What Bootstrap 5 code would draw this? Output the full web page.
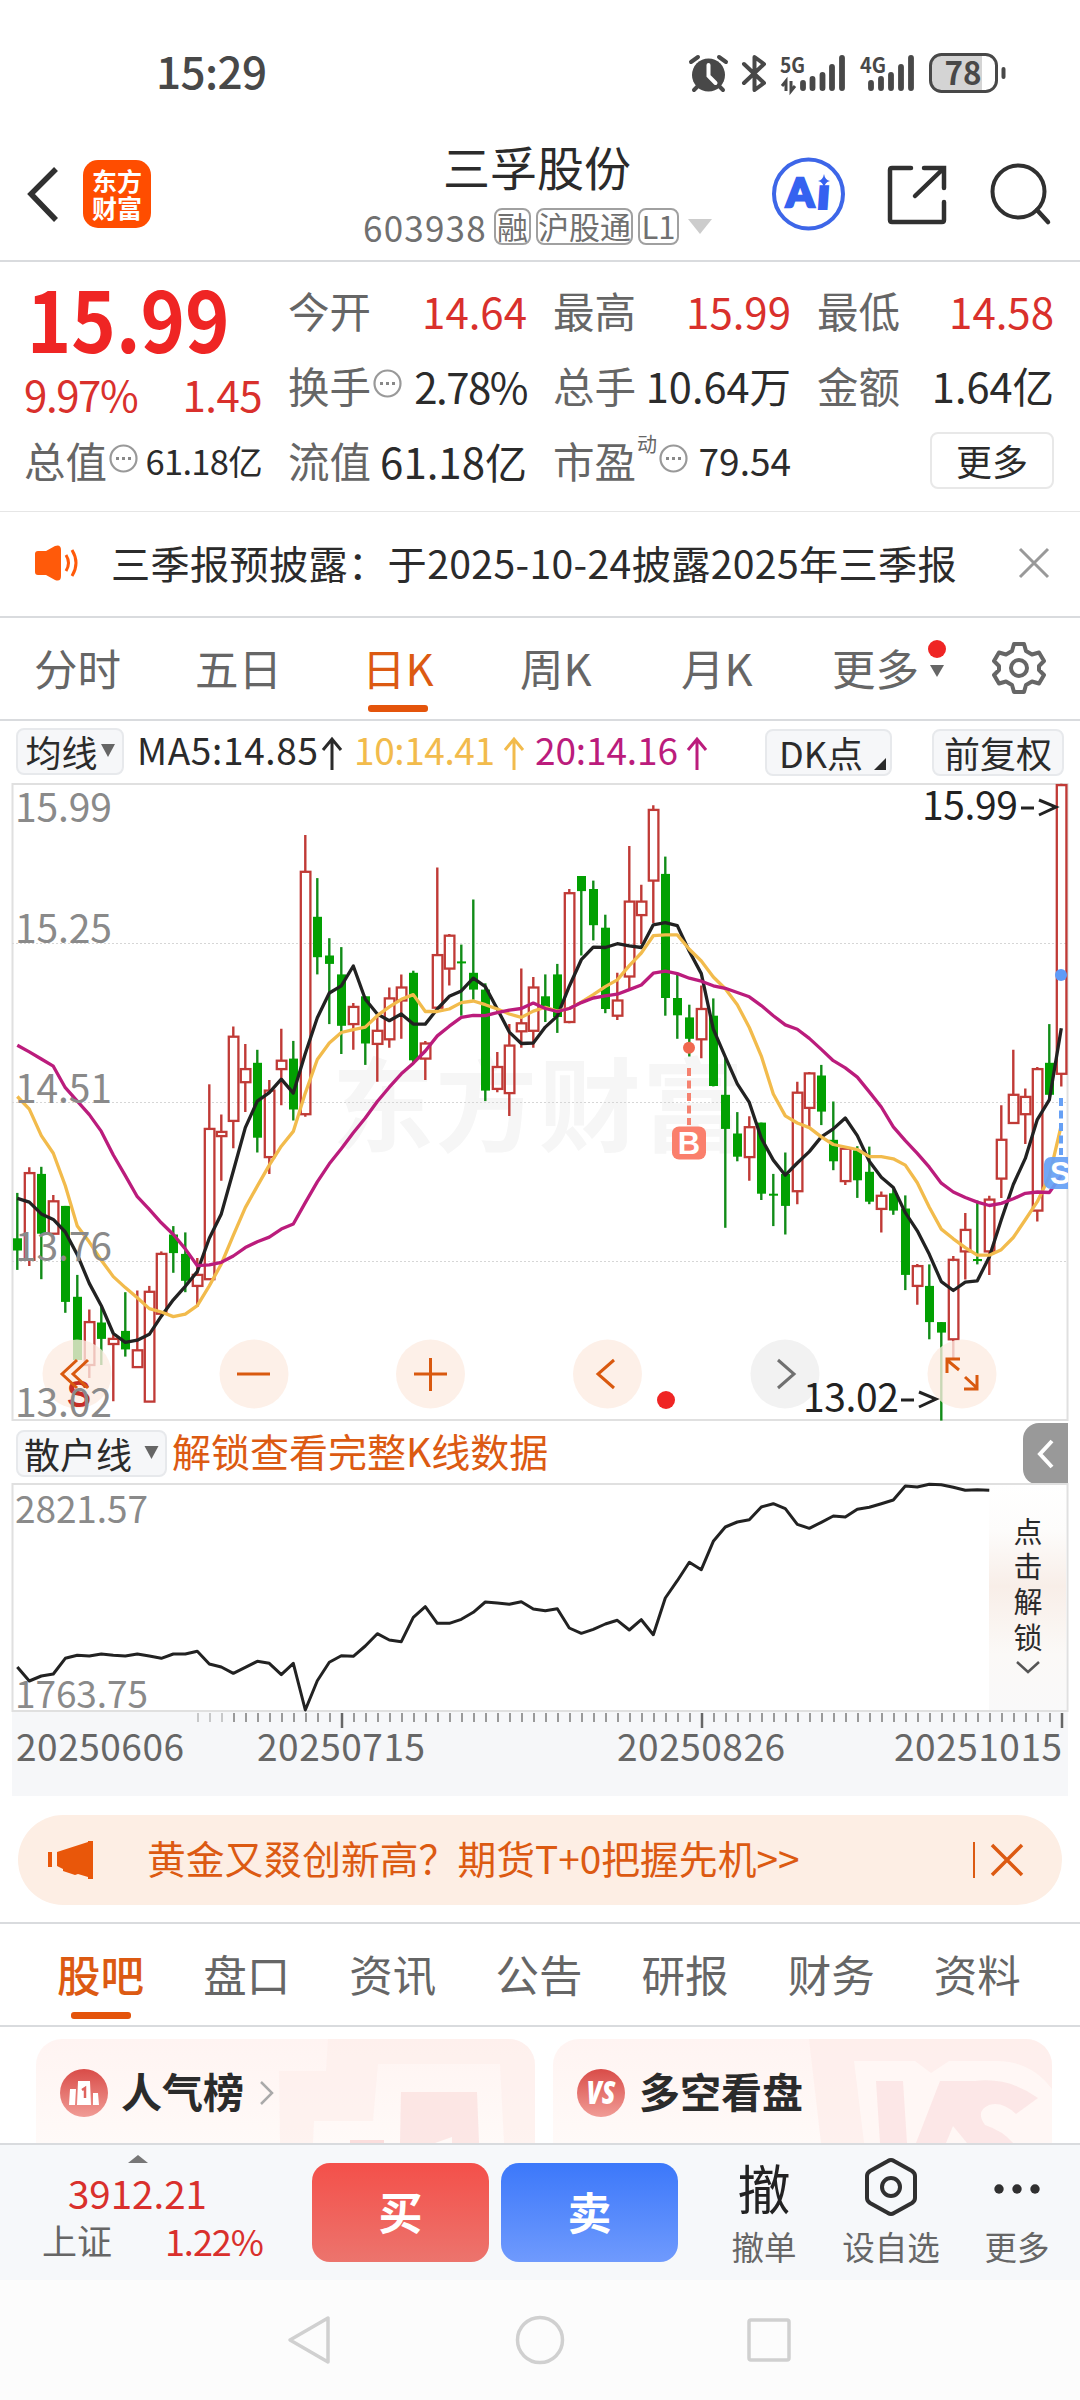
<!DOCTYPE html>
<html lang="zh-CN">
<head>
<meta charset="utf-8">
<meta name="viewport" content="width=device-width, initial-scale=1">
<title>三孚股份 603938</title>
<link href="https://cdn.jsdelivr.net/npm/bootstrap@5.3.0/dist/css/bootstrap.min.css" rel="stylesheet">
<style>
:root{--ink:#2b2b2b;--dim:#666;--up:#d9302c;--brand:#dc5a12;--rule:#d9dbde}
body{width:1080px;height:2400px;overflow:hidden;background:#fff;color:var(--ink);font-family:"Noto Sans CJK SC",sans-serif;line-height:1;white-space:nowrap}
svg{display:block;flex:none;overflow:visible}
.dim{color:var(--dim)} .up{color:var(--up)} .brand{color:var(--brand)}
.statusbar{height:124px;padding:48px 74px 0 156px;color:#484848}
.clock{font-size:44px;font-weight:500;letter-spacing:-.6px}
.titlebar{height:138px;border-bottom:2px solid var(--rule);padding:0 28px 0 26px}
.logo{width:68px;height:68px;margin-left:24px;background:#ff4d00;border-radius:15px;color:#fff;font-size:25px;font-weight:600;line-height:27px}
.titlebox{width:350px;margin-left:212px;padding-top:17px}
.stockname{font-size:47px;height:50px;line-height:50px;padding-left:80px}
.codeline{height:37px;margin-top:17px;gap:5px;color:#707070}
.codeline .num{font-size:35px;letter-spacing:1.2px;width:126px}
.tag{border:2px solid #a0a0a0;border-radius:8px;height:37px;line-height:31px;font-size:31px;text-align:center}
.quote{height:250px;border-bottom:1px solid #e6e6e6;display:grid;grid-template-columns:238px 239px 238px 237px;column-gap:26px;padding:11px 0 0 24px}
.qcol>div{height:75px;display:flex;align-items:center;justify-content:space-between;font-size:42px}
.qcol .lab{color:var(--dim);font-size:41.5px}
.qcol svg{margin:-4px auto 0 2px}
.price{font-size:84px;font-weight:700;color:#ef2524;transform:scaleX(.9);transform-origin:left}
.more-btn{width:124px;height:57px;border:2px solid #e8e8e8;border-radius:8px;font-size:36px;padding-bottom:2px}
.news{height:106px;border-bottom:2px solid var(--rule);padding:0 31px 2px 33px;font-size:39.2px;letter-spacing:.33px}
.periods{height:103px;border-bottom:2px solid var(--rule);font-size:43.5px;color:var(--dim);padding-left:34px}
.periods>div{height:101px;position:relative;display:flex;align-items:center;padding-bottom:2px}
.uline{position:absolute;width:60px;height:7px;border-radius:3px;background:#e4540b}
.chip{background:#f6f7f9;border:2px solid #e7e9ec;border-radius:8px;height:47px;font-size:36px;padding-bottom:2px;display:flex;align-items:center;justify-content:center}
.indic{height:64px;padding:7px 16px 0;font-size:37px}
.sub{height:62px;padding:7px 12px 0 16px}
.drawer{width:45px;height:62px;background:#999;border-radius:16px 0 0 16px;margin-top:-7px}
.promo{height:90px;border-radius:45px;background:#fdeee4;margin:18px 18px 17px;padding:0 38px 0 30px;font-size:38.8px}
.sections{height:105px;border-top:2px solid var(--rule);border-bottom:2px solid var(--rule);font-size:43.5px;color:var(--dim);padding-left:57px}
.sections>div{width:146.4px;height:101px;position:relative;display:flex;align-items:center;padding-bottom:2px}
.tiles{height:116px;padding:12px 28px 0 36px;gap:18px}
.tile{width:499px;height:104px;border-radius:26px 26px 0 0;background:linear-gradient(#fff4f2,#fffaf8);position:relative;overflow:hidden;font-size:41px;font-weight:600;padding:30px 0 0 24px}
.tile .art{position:absolute;right:0;top:0}
.tradebar{height:137px;background:#f6f8fa;border-top:2px solid var(--rule)}
.index{width:312px;padding:10px 0 0 42px}
.deal{width:177px;height:99px;border:0;border-radius:18px;color:#fff;font-size:44px;font-weight:700;margin-top:18px;padding-bottom:4px}
.buy{background:linear-gradient(#f4504a,#ec746d)} .sell{background:linear-gradient(#3c78fa,#6f9afd)}
.act{height:135px;font-size:32.5px;color:var(--dim);display:flex;flex-direction:column;align-items:center;padding-top:13px}
.act .pic{height:58px;display:flex;align-items:center;color:#222}
.sysnav{height:120px;background:#fcfcfc}
</style>
</head>
<body>
<header class="statusbar d-flex align-items-start justify-content-between">
  <div class="clock">15:29</div>
  <svg width="320" height="44" viewBox="686 50 320 44" fill="#484848" stroke="none" style="margin-top:2px">
    <circle cx="708.500" cy="75" r="16.500"/><path d="M708.500 65v11l7 7" stroke="#fff" stroke-width="4" fill="none" stroke-linecap="round"/>
    <path d="M691 62l7-5M726 62l-7-5M698 86l-4 4M719 86l4 4" stroke="#484848" stroke-width="4" fill="none" stroke-linecap="round"/>
    <path d="M744 64l20 19-9.500 7V57l9.500 7-20 19" stroke="#484848" stroke-width="4" fill="none" stroke-linejoin="round" stroke-linecap="round"/>
    <text x="780" y="73" font-size="21" font-weight="700" textLength="25" lengthAdjust="spacingAndGlyphs">5G</text>
    <path d="M786 91V81l-4 5M791 81v10l4-5" stroke="#484848" stroke-width="3" fill="none"/>
    <path d="M803 83v5M812.500 79v9M822.500 75v13M832 67v21M842 58v30" stroke="#484848" stroke-width="5.800" stroke-linecap="round"/>
    <text x="860" y="73" font-size="21" font-weight="700" textLength="26" lengthAdjust="spacingAndGlyphs">4G</text>
    <path d="M871 83v5M881 79v9M891 75v13M901 67v21M911 58v30" stroke="#484848" stroke-width="5.800" stroke-linecap="round"/>
    <path d="M940 56h42v36h-42q-9 0-9-9V65q0-9 9-9z" fill="#d4d4d4"/>
    <rect x="930.500" y="54.500" width="66" height="37" rx="11" fill="none" stroke="#484848" stroke-width="3"/>
    <path d="M1003.500 69v8" stroke="#484848" stroke-width="4" stroke-linecap="round"/>
    <text x="944.500" y="84.500" font-size="32" font-weight="700" textLength="37" lengthAdjust="spacingAndGlyphs">78</text>
  </svg>
</header>

<div class="titlebar d-flex align-items-start">
  <svg width="33" height="60" viewBox="0 0 33 60" style="margin-top:40px"><path d="M30 5L5 30l25 26" fill="none" stroke="#303030" stroke-width="5.500"/></svg>
  <div class="logo d-flex flex-column align-items-center justify-content-center" style="margin-top:36px"><span>东方</span><span>财富</span></div>
  <div class="titlebox">
    <div class="stockname">三孚股份</div>
    <div class="codeline d-flex align-items-center">
      <span class="num">603938</span><span class="tag" style="width:37px">融</span><span class="tag" style="width:97px">沪股通</span><span class="tag" style="width:41px">L1</span>
      <svg width="24" height="15" viewBox="0 0 24 15" class="ms-1"><path d="M0 0h24L12 15z" fill="#ccc"/></svg>
    </div>
  </div>
  <svg width="280" height="80" viewBox="770 154 280 80" style="margin:30px 0 0 57px" fill="none">
    <circle cx="808.500" cy="194" r="34.500" stroke="#3d66e8" stroke-width="4"/>
    <g fill="#3562f0" stroke="#3562f0" stroke-width="2.500" font-family="Lato" font-size="40" font-weight="900"><text x="786" y="207">A</text><text x="818" y="208.500" transform="skewX(-4) translate(14 0)" stroke-width="4">ı</text></g>
    <path d="M824 174q1 6 6 7-5 1-6 7-1-6-6-7 5-1 6-7z" fill="#3562f0"/>
    <path d="M911 168h-19q-2 0-2 2v50q0 2 2 2h50q2 0 2-2v-18M924 168h20v20M943 169l-28 27" stroke="#303030" stroke-width="4.500" stroke-linecap="round"/>
    <circle cx="1018.500" cy="191.500" r="26" stroke="#303030" stroke-width="4"/><path d="M1037 210l11 12" stroke="#303030" stroke-width="4.500" stroke-linecap="round"/>
  </svg>
</div>

<section class="quote">
  <div class="qcol">
    <div><span class="price" style="padding:13px 0 0 3px">15.99</span></div>
    <div class="up" style="padding-top:16px"><span style="letter-spacing:-1.4px">9.97%</span><span style="letter-spacing:-.5px">1.45</span></div>
    <div><span class="lab">总值</span><svg width="29" height="29" viewBox="0 0 29 29"><circle cx="14.500" cy="14.500" r="13" fill="none" stroke="#999" stroke-width="2.200"/><path d="M7 14.500h3M13 14.500h3M19 14.500h3" stroke="#888" stroke-width="3"/></svg><span style="font-size:34.500px;letter-spacing:-.7px">61.18亿</span></div>
  </div>
  <div class="qcol">
    <div><span class="lab">今开</span><span class="up">14.64</span></div>
    <div><span class="lab">换手</span><svg width="29" height="29" viewBox="0 0 29 29"><circle cx="14.500" cy="14.500" r="13" fill="none" stroke="#999" stroke-width="2.200"/><path d="M7 14.500h3M13 14.500h3M19 14.500h3" stroke="#888" stroke-width="3"/></svg><span style="letter-spacing:-1.500px">2.78%</span></div>
    <div><span class="lab">流值</span><span>61.18亿</span></div>
  </div>
  <div class="qcol">
    <div><span class="lab">最高</span><span class="up">15.99</span></div>
    <div><span class="lab">总手</span><span style="font-size:41.500px">10.64万</span></div>
    <div><span class="lab">市盈</span><span class="dim align-self-start" style="font-size:20px;margin:11px 0 0 1px">动</span><svg width="29" height="29" viewBox="0 0 29 29"><circle cx="14.500" cy="14.500" r="13" fill="none" stroke="#999" stroke-width="2.200"/><path d="M7 14.500h3M13 14.500h3M19 14.500h3" stroke="#888" stroke-width="3"/></svg><span style="font-size:37px">79.54</span></div>
  </div>
  <div class="qcol">
    <div><span class="lab">最低</span><span class="up">14.58</span></div>
    <div><span class="lab">金额</span><span style="font-size:41.500px">1.64亿</span></div>
    <div class="justify-content-end"><span class="more-btn d-flex align-items-center justify-content-center">更多</span></div>
  </div>
</section>

<section class="news d-flex align-items-center">
  <svg width="46" height="36" viewBox="0 0 46 36"><path d="M2 9q0-3 3-3h8L22 1q6-2 6 4v26q0 6-6 4l-9-5H5q-3 0-3-3z" fill="#ff5a0a"/><path d="M33 10q5 8 0 16M39 5q8 13 0 26" fill="none" stroke="#ff5a0a" stroke-width="3"/></svg>
  <span style="margin-left:32px">三季报预披露：于2025-10-24披露2025年三季报</span>
  <svg class="ms-auto" width="30" height="30" viewBox="0 0 30 30"><path d="M1 1l28 28M29 1L1 29" stroke="#999" stroke-width="3"/></svg>
</section>

<nav class="periods d-flex">
  <div style="width:161px">分时</div><div style="width:167px">五日</div>
  <div class="brand" style="width:158px">日K<i class="uline" style="left:6px;top:87px"></i></div>
  <div style="width:161px">周K</div><div style="width:151px">月K</div><div style="width:161px">更多
    <svg class="ms-2" width="20" height="40" viewBox="0 0 20 40" style="margin-top:-16px"><circle cx="10" cy="9" r="9" fill="#ef2524"/><path d="M3 25h14l-7 12z" fill="#666"/></svg></div>
  <div><svg width="52" height="52" viewBox="0 0 52 52" fill="none" stroke="#666" stroke-width="4"><path d="M21 2h10l2 7 6 3.500 7-2 5 8.500-5 5v4l5 5-5 8.500-7-2-6 3.500-2 7H21l-2-7-6-3.500-7 2L1 33l5-5v-4l-5-5 5-8.500 7 2L19 9z" stroke-linejoin="round"/><circle cx="26" cy="26" r="8"/></svg></div>
</nav>

<div class="indic d-flex align-items-start">
  <div class="chip" style="width:108px">均线<svg width="14" height="13" viewBox="0 0 14 13" style="margin-left:3px"><path d="M0 0h14L7 13z" fill="#666"/></svg></div>
  <svg width="640" height="47" viewBox="124 728 640 47" font-size="37">
    <g fill="#2b2b2b"><text x="137" y="765" textLength="181" lengthAdjust="spacing">MA5:14.85</text><path d="M332 740v30M323 750l9-11 9 11" stroke="#2b2b2b" stroke-width="3" fill="none"/></g>
    <g fill="#f2bb4c"><text x="354" y="765" textLength="141">10:14.41</text><path d="M514 740v30M505 750l9-11 9 11" stroke="#f2bb4c" stroke-width="3" fill="none"/></g>
    <g fill="#bb1c7c"><text x="535" y="765" textLength="143">20:14.16</text><path d="M697 740v30M688 750l9-11 9 11" stroke="#bb1c7c" stroke-width="3" fill="none"/></g>
  </svg>
  <div class="chip position-relative" style="width:127px;margin-left:1px;padding-right:15px;margin-top:1px">DK点<svg class="position-absolute end-0 bottom-0 me-1 mb-1" width="12" height="12"><path d="M12 0v12H0z" fill="#2b2b2b"/></svg></div>
  <div class="chip" style="width:132px;margin:1px 0 0 auto">前复权</div>
</div>

<svg id="kline" width="1080" height="638" viewBox="0 785 1080 638" font-size="39">
  <defs><clipPath id="plot"><rect x="12" y="783" width="1056" height="639"/></clipPath></defs>
  <text x="332" y="1144" font-size="102" font-weight="700" fill="#f6f6f6" textLength="412">东方财富</text>
  <rect x="12.500" y="784" width="1055" height="636" fill="none" stroke="#e0e0e0" stroke-width="2"/>
  <path d="M12 943.500H1067M12 1102.500H1067M12 1261.500H1067" stroke="#d6d6d6" stroke-dasharray="2 2"/>
  <g id="candles"></g>
  <g fill="#fdece2" fill-opacity=".78"><circle cx="77" cy="1374" r="34.500"/><circle cx="254" cy="1374" r="34.500"/><circle cx="430.500" cy="1374" r="34.500"/><circle cx="607.500" cy="1374" r="34.500"/><circle cx="785" cy="1374" r="34.500" fill="#eee"/><circle cx="962" cy="1374" r="34.500"/></g>
  <g id="averages" fill="none" stroke-width="3.300" stroke-linejoin="round"></g>
  <g clip-path="url(#plot)">
    <circle cx="689" cy="1047.700" r="6" fill="#f0684f"/><path d="M689 1068v57" stroke="#f58270" stroke-width="4" stroke-dasharray="8 4.500"/>
    <rect x="672" y="1126.500" width="34" height="33" rx="7" fill="#fa7f6c"/><text x="689" y="1154" font-family="Liberation Sans" font-weight="700" font-size="31" fill="#fff" text-anchor="middle">B</text>
    <circle cx="1061" cy="975" r="6" fill="#5f9bf8"/><path d="M1061 1098v57" stroke="#66a0f5" stroke-width="4" stroke-dasharray="8 4.500"/>
    <rect x="1044" y="1157" width="40" height="32" rx="7" fill="#66a0f5" fill-opacity=".93"/><text x="1050" y="1184" font-family="Liberation Sans" font-weight="700" font-size="31" fill="#fff">S</text>
    <text x="79" y="1407" font-family="Liberation Sans" font-weight="700" font-size="36" fill="#c62c25" text-anchor="middle">S</text>
  </g>
  <g fill="none" stroke="#d9590f" stroke-width="3">
    <path d="M77 1360l-15 14 15 14M88 1360l-15 14 15 14M237 1374h33M414 1374h33M430.500 1358v33M614 1360l-16 14 16 14"/>
    <path d="M947 1373v-14h13M947 1360l12 10M965 1377l12 11M977 1375v14h-13"/>
    <path d="M778 1360l16 14-16 14" stroke="#707070"/>
  </g>
  <circle cx="666" cy="1400" r="9" fill="#ef2524"/>
  <g fill="#8a8a8a"><text x="15" y="822" textLength="97">15.99</text><text x="15" y="943" textLength="97">15.25</text><text x="15" y="1103" textLength="97">14.51</text><text x="15" y="1261" textLength="97">13.76</text><text x="15" y="1417" textLength="97">13.02</text></g>
  <g fill="#222"><text x="922" y="820" textLength="96">15.99</text><path d="M1021 808h13M1039 800l17 7-17 8" fill="none" stroke="#222" stroke-width="3"/><text x="803" y="1412" textLength="96">13.02</text><path d="M901 1400h13M919 1392l17 7-17 8" fill="none" stroke="#222" stroke-width="3"/></g>
</svg>

<div class="sub d-flex">
  <div class="chip" style="width:151px">散户线<svg width="15" height="13" viewBox="0 0 14 13" style="margin-left:12px"><path d="M0 0h14L7 13z" fill="#666"/></svg></div>
  <span class="brand" style="font-size:39px;margin:1px 0 0 5px">解锁查看完整K线数据</span>
  <div class="drawer ms-auto d-flex align-items-center justify-content-center"><svg width="16" height="28" viewBox="0 0 16 28"><path d="M14 1L2 14l12 13" fill="none" stroke="#fff" stroke-width="4"/></svg></div>
</div>

<svg id="retail" width="1080" height="312" viewBox="0 1485 1080 312" font-size="37">
  <defs><linearGradient id="veil" x1="0" y1="0" x2="0" y2="1"><stop offset="0" stop-color="#fff"/><stop offset=".2" stop-color="#fdfcfb"/><stop offset=".45" stop-color="#f8eee8"/><stop offset=".75" stop-color="#fbf9f7"/><stop offset="1" stop-color="#f9f9f9"/></linearGradient></defs>
  <rect x="12" y="1711" width="1056" height="85" fill="#f6f7f9"/>
  <rect x="12.500" y="1484" width="1055" height="227" fill="#fff" stroke="#e0e0e0" stroke-width="2"/>
  <rect x="989" y="1485" width="77" height="225" fill="url(#veil)"/>
  <g fill="#8a8a8a"><text x="15" y="1523" textLength="133">2821.57</text><text x="15" y="1708" textLength="133">1763.75</text></g>
  <g id="ticks" stroke="#9a9a9a" stroke-width="2"></g>
  <g id="flow" fill="none" stroke="#222" stroke-width="3" stroke-linejoin="round"></g>
  <g fill="#666"><text x="16" y="1761" textLength="168">20250606</text><text x="257" y="1761" textLength="168">20250715</text><text x="617" y="1761" textLength="168">20250826</text><text x="894" y="1761" textLength="168">20251015</text></g>
  <g font-size="29" fill="#2b2b2b" text-anchor="middle"><text x="1028" y="1543">点</text><text x="1028" y="1578">击</text><text x="1028" y="1613">解</text><text x="1028" y="1649">锁</text></g>
  <path d="M1017 1662l11 10 11-10" fill="none" stroke="#555" stroke-width="2.500"/>
</svg>

<div class="promo brand d-flex align-items-center">
  <svg width="46" height="40" viewBox="0 0 46 40" fill="#e9570a"><path d="M0 12h4v15H0zM9 12L40 2V1h5v38h-5v-2l-10-3-3 1-12-4 0-2-6-3z"/></svg>
  <span style="margin:-5px 0 0 53px">黄金又叕创新高？期货T+0把握先机&gt;&gt;</span>
  <svg class="ms-auto" width="51" height="38" viewBox="0 0 51 38" stroke="#dc5a12" fill="none"><path d="M1 1v36" stroke-width="2"/><path d="M19 4l30 30M49 4L19 34" stroke-width="3.500"/></svg>
</div>

<nav class="sections d-flex">
  <div class="brand fw-medium">股吧<i class="uline" style="left:14px;top:88px"></i></div><div>盘口</div><div>资讯</div><div>公告</div><div>研报</div><div>财务</div><div>资料</div>
</nav>

<div class="tiles d-flex">
  <div class="tile d-flex align-items-start">
    <svg class="art" width="260" height="104" viewBox="0 0 260 104"><path d="M53 0h207v104h-31L225 25H103l-5 57H39l-1 22H5L4 32h47z" fill="#fdecea" opacity=".55"/><path d="M126 53h76l2 51h-79z" fill="#fbdedd" opacity=".7"/><path d="M160 104l17-6v6z" fill="#fffaf8"/><path d="M75 101h34v3H75z" fill="#fbdedd"/></svg>
    <svg width="48" height="48" viewBox="0 0 48 48"><defs><linearGradient id="rose" x1="0" y1="0" x2="0" y2="1"><stop stop-color="#d94c48"/><stop offset="1" stop-color="#f19c96"/></linearGradient></defs><circle cx="24" cy="24" r="24" fill="url(#rose)"/><path d="M10 20h6l-1 16H9zM18 12h12l1 24H17zM33 24h5l1 12h-6z" fill="#fff"/><path d="M22 21l3-2v10" fill="none" stroke="#df625d" stroke-width="2.500"/></svg>
    <span style="margin:1px 0 0 13px">人气榜</span><svg width="16" height="26" viewBox="0 0 16 26" style="margin:11px 0 0 15px"><path d="M2 2l11 11L2 24" fill="none" stroke="#aaa" stroke-width="2.500"/></svg>
  </div>
  <div class="tile d-flex align-items-start">
    <svg class="art" width="243" height="104" viewBox="0 0 243 104"><path d="M0 0h243v104H12z" fill="#fdecea" opacity=".7"/><path d="M45 22h61l16 12 18-12h48q34 0 55 28v54H55z" fill="#fff7f5" opacity=".9"/><path d="M67 42h27l4 62H71zM131 42h35q34-4 63 17l-22 16q-14-13-27-9-14 6-4 20 18 6 28 18h-46l-14-17-7 17h-30z" fill="#fbdfde" opacity=".65"/></svg>
    <svg width="48" height="48" viewBox="0 0 48 48"><circle cx="24" cy="24" r="24" fill="url(#rose)"/><text x="24" y="35" font-size="31" font-family="Open Sans" font-weight="800" font-style="italic" fill="#fff" text-anchor="middle" textLength="29" lengthAdjust="spacingAndGlyphs">VS</text></svg>
    <span style="margin:1px 0 0 14px">多空看盘</span>
  </div>
</div>

<footer class="tradebar d-flex align-items-start">
  <div class="index">
    <svg width="20" height="8" viewBox="0 0 20 8" style="margin-left:86px"><path d="M10 0l10 8H0z" fill="#777"/></svg>
    <div class="up" style="font-size:38.500px;margin:10px 0 0 26px">3912.21</div>
    <div class="d-flex align-items-center" style="width:221px;margin-top:10px"><span class="dim" style="font-size:35px">上证</span><span class="up ms-auto" style="font-size:36px;letter-spacing:-1px">1.22%</span></div>
  </div>
  <button class="deal buy">买</button><button class="deal sell" style="margin-left:12px">卖</button>
  <div class="act" style="width:100px;margin-left:36px"><div class="pic" style="font-size:53px">撤</div><span style="margin-top:14px">撤单</span></div>
  <div class="act" style="width:120px;margin-left:17px"><div class="pic"><svg width="54" height="58" viewBox="0 0 54 58" fill="none" stroke="#303030" stroke-width="4"><path d="M24 3q3-2 6 0l18 10q3 2 3 5v22q0 3-3 5L30 55q-3 2-6 0L6 45q-3-2-3-5V18q0-3 3-5z"/><circle cx="27" cy="29" r="9"/></svg></div><span style="margin-top:14px">设自选</span></div>
  <div class="act" style="width:100px;margin-left:16px"><div class="pic"><svg width="46" height="10" viewBox="0 0 46 10" style="margin-top:4px"><g fill="#303030"><circle cx="5" cy="5" r="4.700"/><circle cx="23" cy="5" r="4.700"/><circle cx="41" cy="5" r="4.700"/></g></svg></div><span style="margin-top:14px">更多</span></div>
</footer>
<div class="sysnav">
  <svg width="1080" height="120" viewBox="0 2280 1080 120" fill="none" stroke="#d0d0d0" stroke-width="3.500" stroke-linejoin="round"><path d="M328 2318v44l-38-22z"/><circle cx="540" cy="2340" r="22.500"/><rect x="749" y="2320" width="40" height="40" rx="2"/></svg>
</div>

<script src="https://cdn.jsdelivr.net/npm/bootstrap@5.3.0/dist/js/bootstrap.bundle.min.js"></script>
<script>
// Each session: direction (r = rise, g = fall), high, body top, body bottom, low, in plot units.
const sessions = `g 981 1089 1118 1164|r 920 934 1140 1155|g 919 936 1078 1186|r 986 1001 1078 1078|g 1012 1012 1240 1266|g 1176 1228 1378 1378|r 1258 1288 1390 1421|g 1250 1289 1328 1390|r 1318 1328 1340 1476|g 1217 1309 1353 1370|r 1213 1355 1395 1395|r 1202 1216 1477 1477|r 1120 1126 1268 1268|g 1060 1080 1124 1171|g 1075 1126 1190 1217|r 1136 1176 1202 1252|r 723 829 1186 1186|r 795 836 846 952|r 586 610 810 875|r 627 687 718 789|g 641 672 850 885|r 713 738 896 936|r 591 667 687 773|g 620 662 783 809|r 131 218 794 800|g 233 325 421 462|g 376 417 437 580|g 397 462 584 651|r 530 539 580 641|g 514 514 626 677|r 554 596 627 717|r 493 519 616 636|r 462 493 524 615|g 453 458 666 672|r 620 626 662 713|r 208 416 541 545|r 366 370 448 488|g 391 431 434 560|g 284 458 498 522|g 483 498 738 763|r 646 682 734 742|r 580 631 744 798|r 448 578 597 636|r 468 493 596 636|g 462 514 540 575|g 437 462 563 601|r 259 269 575 578|g 228 228 264 417|g 239 259 345 381|g 320 351 544 554|r 458 524 560 570|r 157 289 467 497|r 249 289 321 390|r 60 71 239 340|g 182 223 518 560|g 462 518 559 615|g 534 564 615 657|r 488 544 616 661|g 519 560 727 728|g 660 748 829 1064|g 789 840 895 906|r 799 825 896 952|g 814 814 983 998|g 936 983 987 1060|g 885 936 1012 1080|r 717 743 977 1008|r 694 697 779 824|g 677 702 788 820|g 764 855 906 927|r 870 876 953 962|g 870 880 951 993|g 871 931 1002 1008|r 978 988 1019 1075|g 970 982 1023 1033|g 987 1018 1176 1212|r 1150 1155 1202 1247|g 1151 1202 1288 1329|g 1288 1288 1313 1522|r 1131 1140 1329 1374|r 1029 1069 1120 1187|g 999 1138 1142 1151|r 988 997 1120 1176|r 773 855 947 993|r 641 748 815 817|r 733 753 794 865|r 682 687 1023 1049|g 580 672 748 760|r 9 12 698 728`.split('|');
const averages = {
 '#222': [994,1003,1031,1044,1074,1128,1196,1249,1315,1336,1331,1317,1274,1235,1203,1168,1089,1031,929,826,763,743,711,744,650,565,506,489,442,521,556,572,556,580,580,544,514,501,471,491,544,599,626,625,587,561,490,427,397,398,389,394,398,344,339,346,407,460,592,658,722,766,851,903,939,910,883,848,829,803,845,906,944,968,1028,1071,1127,1192,1213,1193,1190,1133,1045,961,899,807,760,590],
 '#f2bb4c': [752,782,845,887,964,1060,1098,1141,1180,1206,1230,1256,1264,1275,1269,1249,1202,1150,1082,1016,965,915,870,835,744,664,625,600,593,587,560,539,521,510,550,550,544,529,525,534,544,556,564,549,540,549,543,528,510,491,475,441,411,370,368,368,402,430,468,496,534,588,656,746,798,815,826,848,866,872,878,895,895,900,915,957,1015,1067,1090,1111,1129,1129,1116,1087,1045,1002,942,820],
 '#bb1c7c': [630,646,663,680,731,763,795,835,891,940,990,1020,1052,1080,1114,1154,1152,1146,1131,1111,1097,1086,1067,1055,1004,955,912,876,838,803,764,730,698,673,644,608,585,564,559,560,553,547,543,530,543,550,543,529,518,513,509,498,487,459,454,460,471,478,489,495,505,515,536,560,582,592,614,640,667,684,706,741,777,824,857,887,920,958,979,992,1003,1011,1006,995,982,979,980,940]
};
const retail = [801,843,828,822,775,766,768,762,766,768,762,768,775,762,762,754,792,801,820,802,784,790,824,790,930,842,787,767,769,738,701,720,725,652,620,670,670,658,637,606,609,613,605,627,632,626,684,700,688,672,661,690,659,704,594,542,487,509,424,381,366,359,321,311,326,373,385,367,348,351,328,322,311,300,258,261,253,254,262,271,269,271];
const X = i => 17.3 + 12 * i, Y = v => +(780 + v / 2.376).toFixed(1);
const put = (id, s) => document.getElementById(id).innerHTML = s;
put('candles', sessions.map((s, i) => {
  const [d, ...p] = s.split(' '), [h, t, b, l] = p.map(v => Y(+v)), x = X(i), c = d === 'r' ? '#c03a36' : '#118c18';
  const wick = `<path d="M${x} ${h}V${d === 'r' ? t : l}${d === 'r' ? `M${x} ${b}V${l}` : ''}" stroke="${c}" stroke-width="2.4"/>`;
  return wick + (d === 'r'
    ? `<rect x="${x - 4.5}" y="${t}" width="9.6" height="${Math.max(b - t, 2)}" fill="none" stroke="${c}" stroke-width="2.3"/>`
    : `<rect x="${x - 4.3}" y="${t}" width="9" height="${Math.max(b - t, 2)}" fill="#02a002"/>`);
}).join(''));
put('averages', Object.entries(averages).map(([c, v]) => `<polyline stroke="${c}" points="${v.map((y, i) => X(i) + ',' + Y(y)).join(' ')}"/>`).join(''));
put('flow', `<polyline points="${retail.map((y, i) => X(i) + ',' + (1400 + y / 3).toFixed(1)).join(' ')}"/>`);
let t = '';
for (let i = 15; i < 88; i++) { const big = i === 27 || i === 57 || i === 87; t += `<path d="M${12 * i + 18} 1713v${big ? 15 : 9}"${big ? ' stroke="#666" stroke-width="2.5"' : i < 18 ? ' opacity=".5"' : ''}/>`; }
put('ticks', t);
</script>
</body>
</html>
